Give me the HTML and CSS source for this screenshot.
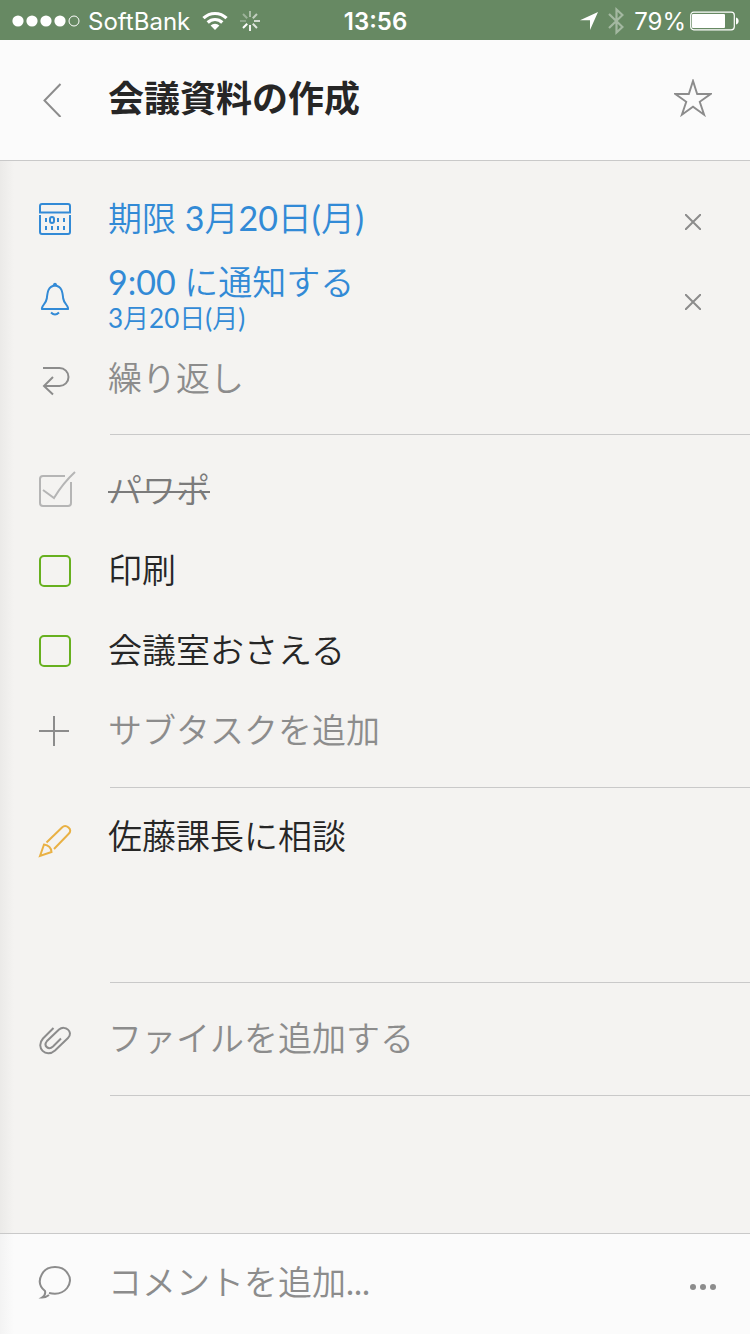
FILE: index.html
```html
<!DOCTYPE html>
<html lang="ja">
<head>
    <meta charset="UTF-8">
    <meta name="viewport" content="width=device-width, initial-scale=1.0">
    <title>会議資料の作成</title>
    <link rel="stylesheet" href="styles.css">
</head>
<body>
    <div class="status-bar">
        <div class="status-left">
            <svg width="68" height="12" viewBox="0 0 68 12" fill="#fff">
                <circle cx="6" cy="6" r="5.6"/>
                <circle cx="20" cy="6" r="5.6"/>
                <circle cx="34" cy="6" r="5.6"/>
                <circle cx="48" cy="6" r="5.6"/>
                <circle cx="62" cy="6" r="5" fill="none" stroke="#fff"/>
            </svg>
            <span class="carrier">SoftBank</span>
            <svg width="26" height="20" viewBox="0 0 26 20" fill="none" stroke="#fff" stroke-width="3.2">
                <path d="M1.5 7.2a16.4 16.4 0 0 1 23 0"/>
                <path d="M5.7 11.5a10.4 10.4 0 0 1 14.6 0"/>
                <path d="M13 19l-4.4-4.5a6.4 6.4 0 0 1 8.8 0z" fill="#fff" stroke="none"/>
            </svg>
            <svg class="spinner" width="20" height="20" viewBox="0 0 20 20" stroke="#fff" stroke-width="2">
                <path d="M10 0v6" opacity=".45"/>
                <path d="M17 3l-4.2 4.2" opacity=".6"/>
                <path d="M20 10h-6" opacity=".7"/>
                <path d="M17 17l-4.2-4.2" opacity=".8"/>
                <path d="M10 20v-6" opacity=".9"/>
                <path d="M3 17l4.2-4.2"/>
                <path d="M0 10h6" opacity=".25"/>
                <path d="M3 3l4.2 4.2" opacity=".35"/>
            </svg>
        </div>
        <time class="clock">13:56</time>
        <div class="status-right">
            <svg width="18" height="18" viewBox="0 0 18 18" fill="#fff"><path d="M18 0L10 18V8.2H0z"/></svg>
            <svg class="bluetooth" width="16" height="28" viewBox="0 0 16 28" fill="none" stroke="#fff" stroke-width="2.2"><path d="M1 7l13.5 13L8.500 25.500V2.500l6 5.500L1 21"/></svg>
            <span>79%</span>
            <svg class="battery" width="49" height="20" viewBox="0 0 49 20">
                <rect x=".7" y="1.2" width="43.6" height="17.6" rx="3" fill="none" stroke="#fff" stroke-width="1.2"/>
                <rect x="2" y="3" width="33" height="14" rx="1" fill="#fff"/>
                <path d="M46 6.5c3.5.8 3.5 6.2 0 7z" fill="#fff"/>
            </svg>
        </div>
    </div>

    <header class="task-header">
        <button class="icon-button" aria-label="戻る">
            <svg class="icon" viewBox="0 0 34 34"><path d="M22.5 1L6.5 17.5 22.5 34"/></svg>
        </button>
        <h1>会議資料の作成</h1>
        <button class="star-button" aria-label="スター">
            <svg width="38" height="38" viewBox="0 0 40 40"><path d="M20 2l4.400 13.800h14.100L27.100 24l4.600 13.600L20 29.200 8.300 37.600 12.900 24 1.500 15.800h14.100z"/></svg>
        </button>
    </header>

    <main>
        <section class="group dates">
            <div class="row blue">
                <svg class="icon" viewBox="0 0 34 34">
                    <path d="M2 10.500V4q0-2 2-2h26q2 0 2 2v6.500zM2 13v17q0 2 2 2h26q2 0 2-2V13"/>
                    <path d="M8 16v4M20 16v4M26 16v4M8 24v4M14 24v4M20 24v4M26 24v4"/>
                    <rect x="12" y="15" width="4" height="6" rx="2"/>
                </svg>
                <button class="text-button">期限 3月20日(月)</button>
                <button class="clear-button" aria-label="期限を削除"><svg width="16" height="16" viewBox="0 0 16 16"><path d="M0 0l16 16M16 0L0 16"/></svg></button>
            </div>
            <div class="row blue">
                <svg class="icon" viewBox="0 0 34 34">
                    <path d="M4 27h26c1-3-4-5-4.800-10.500C24.500 10 24 4.500 17 3.500 10 4.500 9.500 10 8.800 16.500 8 22 3 24 4 27zM15.500 3q1.500-2.400 3 0M13 30.500q4 4 8 0"/>
                </svg>
                <button class="text-button">9:00 に通知する<small>3月20日(月)</small></button>
                <button class="clear-button" aria-label="通知を削除"><svg width="16" height="16" viewBox="0 0 16 16"><path d="M0 0l16 16M16 0L0 16"/></svg></button>
            </div>
            <div class="row gray">
                <svg class="icon" viewBox="0 0 34 34"><path d="M5 6h16.500a9 9 0 0 1 0 18H7M15 15l-9 9 9 8.500"/></svg>
                <button class="text-button">繰り返し</button>
            </div>
        </section>

        <section class="group">
            <div class="row done">
                <span class="check-box">
                    <input type="checkbox" id="sub1" checked>
                    <svg class="check-mark" width="38" height="38" viewBox="0 0 38 38">
                        <path d="M27 6H5Q2 6 2 9v24q0 3 3 3h25q3 0 3-3V12M5 20l11 8Q25 13 37 2"/>
                    </svg>
                </span>
                <label for="sub1">パワポ</label>
            </div>
            <div class="row">
                <span class="check-box"><input type="checkbox" id="sub2"></span>
                <label for="sub2">印刷</label>
            </div>
            <div class="row">
                <span class="check-box"><input type="checkbox" id="sub3"></span>
                <label for="sub3">会議室おさえる</label>
            </div>
            <div class="row gray">
                <svg class="icon" viewBox="0 0 34 34"><path d="M1 17h30M16 2v30"/></svg>
                <input type="text" placeholder="サブタスクを追加" aria-label="サブタスクを追加">
            </div>
        </section>

        <section class="group note">
            <div class="row">
                <svg class="icon yellow" viewBox="0 0 34 34">
                    <path d="M2 32l4-11.500q7 1 7.500 7.500zM8.500 18.500L24 3.500q3-3 6.500 0t0 6.500L16 25"/>
                </svg>
                <textarea aria-label="メモ">佐藤課長に相談</textarea>
            </div>
        </section>

        <section class="group">
            <div class="row gray">
                <svg class="icon" viewBox="0 0 34 34">
                    <path d="M15.500 6L5 16.500c-8 9 3 20 12 12L30 16c6-6-3-13.500-9-8.500L9 19c-4 5 1.500 9.500 6 5.500l8-8"/>
                </svg>
                <button class="text-button">ファイルを追加する</button>
            </div>
        </section>
    </main>

    <footer class="comment-bar gray">
        <svg class="icon" viewBox="0 0 34 34">
            <path d="M11 28C28 32 36 17 30 9 25-.5 9-.5 4 9 0 16 2 22 7 26q1 4-3 6.500 4 0 7-2.500"/>
        </svg>
        <input type="text" placeholder="コメントを追加..." aria-label="コメントを追加">
        <button class="more-button" aria-label="その他"><svg width="26" height="6" viewBox="0 0 26 6"><circle cx="3" cy="3" r="3"/><circle cx="13" cy="3" r="3"/><circle cx="23" cy="3" r="3"/></svg></button>
    </footer>
</body>
</html>
```
FILE: styles.css
```css
* {
    box-sizing: border-box;
}
body {
    margin: 0;
    min-height: 100vh;
    display: flex;
    flex-direction: column;
    background-color: #f4f3f1;
    color: #262626;
    font-family: Lato, "Noto Sans CJK JP DemiLight", "Noto Sans CJK JP", sans-serif;
    font-size: 34px;
    font-weight: 400;
    line-height: 40px;
}
button, input, textarea {
    margin: 0;
    padding: 0;
    border: none;
    background: none;
    color: inherit;
    font: inherit;
    text-align: left;
}
button {
    cursor: pointer;
}
svg {
    display: block;
    flex-shrink: 0;
}

/* status bar */
.status-bar {
    display: grid;
    grid-template-columns: 1fr auto 1fr;
    align-items: center;
    height: 40px;
    padding: 0 11px 0 12px;
    background-color: #678963;
    color: #fff;
    font-family: Inter, sans-serif;
    font-size: 24px;
}
.status-left, .status-right {
    display: flex;
    align-items: center;
    gap: 8px;
}
.status-right {
    justify-content: flex-end;
    gap: 4px;
}
.status-bar span, .clock {
    padding-top: 2px;
}
.carrier {
    margin-right: 4px;
}
.spinner {
    margin-left: 4px;
}
.clock {
    font-weight: 600;
}
.bluetooth {
    opacity: 0.4;
    margin: 0 6px;
}

/* header */
.task-header {
    display: flex;
    align-items: center;
    height: 121px;
    padding: 0 38px 4px;
    background-color: #fbfbfb;
    border-bottom: 1px solid #c9c9c9;
}
.task-header h1 {
    flex: 1;
    margin: 0 0 0 36px;
    font-family: Lato, "Noto Sans CJK JP", sans-serif;
    font-size: 36px;
    font-weight: 700;
    line-height: 40px;
}
.icon {
    width: 34px;
    height: 34px;
}
.icon, .check-mark, .clear-button svg, .star-button svg {
    fill: none;
    stroke: currentColor;
    stroke-width: 2;
}
.icon-button, .star-button, .clear-button {
    color: #8c8c8c;
}
.icon-button {
    margin-top: 4px;
}

/* task rows */
main {
    flex: 1;
    background: linear-gradient(to right, #ebeae8, #f4f3f1 14px);
}
.group {
    padding: 16px 0 17px;
    background: linear-gradient(#c9c9c9, #c9c9c9) 110px 100% / 100% 1px no-repeat;
}
.dates {
    padding: 18px 0 16px;
}
.row {
    display: flex;
    align-items: center;
    gap: 36px;
    min-height: 80px;
    padding: 0 49px 0 38px;
}
.text-button, .row label, .row input[type="text"], .row textarea {
    flex: 1;
    min-width: 0;
    padding-bottom: 2px;
}
.text-button small {
    display: block;
    font-size: 26px;
    line-height: 32px;
}
.clear-button {
    padding-top: 6px;
}
.blue {
    color: #328ad6;
}
.gray {
    color: #8c8c8c;
}
.yellow {
    color: #e9b144;
}
::placeholder {
    color: #8c8c8c;
    opacity: 1;
}

/* subtasks */
.check-box {
    display: grid;
    grid-template: 34px / 34px;
}
.check-box input {
    appearance: none;
    grid-area: 1 / 1;
    margin: 1px;
    border: 2px solid #67b01f;
    border-radius: 5px;
}
.check-box input:checked {
    border-color: transparent;
}
.check-mark {
    grid-area: 1 / 1;
    align-self: end;
    color: #b5b5b5;
    pointer-events: none;
}
.done label {
    color: #7b7b7b;
    text-decoration: line-through;
    text-decoration-thickness: 2px;
}

/* note */
.note {
    padding-bottom: 4px;
}
.note .row {
    align-items: flex-start;
}
.note .icon {
    margin-top: 20px;
}
.note textarea {
    height: 163px;
    margin-top: 12px;
    resize: none;
    outline: none;
}

/* comment bar */
.comment-bar {
    display: flex;
    align-items: center;
    gap: 36px;
    height: 101px;
    padding: 0 34px 4px 38px;
    background: linear-gradient(to right, #f3f3f3, #fbfbfb 14px);
    border-top: 1px solid #c9c9c9;
}
.comment-bar input {
    flex: 1;
    min-width: 0;
}
.more-button svg {
    fill: #8c8c8c;
    margin-top: 10px;
}
```
